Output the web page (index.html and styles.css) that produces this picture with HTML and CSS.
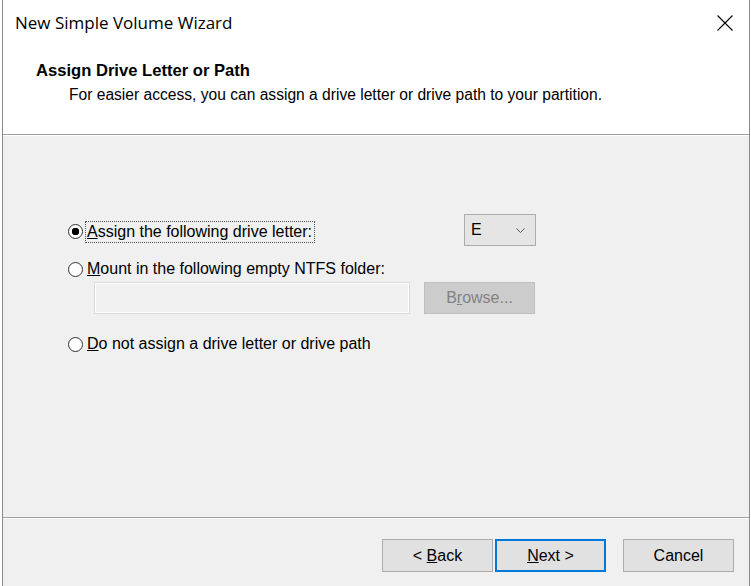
FILE: index.html
```html
<!DOCTYPE html>
<html>
    <head>
        <meta charset="utf-8">
        <title>New Simple Volume Wizard</title>
        <link rel="stylesheet" href="styles.css">
    </head>
    <body>
        <div class="edge"></div>

        <div class="window">
            <div class="titlebar">
                <span class="title">New Simple Volume Wizard</span>
                <svg class="close" width="16" height="16" viewBox="0 0 16 16">
                    <path d="M0.5 0.5 L15.5 15.5 M15.5 0.5 L0.5 15.5" stroke="#000" stroke-width="1.1" fill="none"/>
                </svg>
            </div>

            <div class="header">
                <div class="heading">Assign Drive Letter or Path</div>
                <div class="subtitle">For easier access, you can assign a drive letter or drive path to your partition.</div>
            </div>

            <div class="content">
                <div class="row row-first">
                    <span class="radio checked"></span>
                    <span class="label focused"><u>A</u>ssign the following drive letter:</span>
                    <div class="combo">
                        <span>E</span>
                        <svg width="9" height="5" viewBox="0 0 9 5">
                            <path d="M0.5 0.5 L4.5 4.5 L8.5 0.5" stroke="#555" stroke-width="1" fill="none"/>
                        </svg>
                    </div>
                </div>

                <div class="row row-mount">
                    <span class="radio"></span>
                    <span class="label"><u>M</u>ount in the following empty NTFS folder:</span>
                </div>

                <div class="folder">
                    <div class="field"></div>
                    <div class="btn disabled"><span>B<u>r</u>owse...</span></div>
                </div>

                <div class="row row-none">
                    <span class="radio"></span>
                    <span class="label"><u>D</u>o not assign a drive letter or drive path</span>
                </div>
            </div>

            <div class="footer">
                <div class="btn"><span>&lt; <u>B</u>ack</span></div>
                <div class="btn default"><span><u>N</u>ext &gt;</span></div>
                <div class="btn cancel"><span>Cancel</span></div>
            </div>
        </div>

        <div class="edge edge-right"></div>
    </body>
</html>
```

FILE: styles.css
```css
body {
    display: flex;
    width: 751px;
    height: 586px;
    margin: 0;
    overflow: hidden;
    background: #fff;
    font-family: "Liberation Sans", Arial, sans-serif;
    font-size: 16px;
    color: #000;
}

.edge {
    width: 2px;
    background: #fff;
}

.edge-right {
    width: 1px;
}

.window {
    display: flex;
    flex-direction: column;
    flex: 1;
    border-left: 1px solid #8a8a8a;
    border-right: 1px solid #8a8a8a;
    background: #f0f0f0;
}

.titlebar {
    display: flex;
    align-items: center;
    justify-content: space-between;
    height: 46px;
    padding: 0 16px 0 12px;
    background: #fff;
}

.title {
    font-family: "Open Sans", sans-serif;
    font-size: 17px;
    margin-top: -1px;
}

.close {
    display: block;
}

.header {
    height: 73px;
    padding: 15px 0 0 33px;
    background: #fff;
    border-bottom: 1px solid #a0a0a0;
    box-shadow: 0 1px 0 #fff;
}

.heading {
    font-size: 16.6px;
    font-weight: bold;
    line-height: 20px;
}

.subtitle {
    margin: 4px 0 0 33px;
    font-size: 15.6px;
    line-height: 20px;
}

.content {
    flex: 1;
    padding: 79px 0 0 65px;
    border-bottom: 1px solid #a0a0a0;
    box-shadow: 0 1px 0 #fff;
}

.row {
    display: flex;
    align-items: center;
    height: 20px;
}

.row-first {
    height: 32px;
}

.row-first .radio,
.row-first .label {
    margin-top: 3px;
}

.row-mount {
    margin-top: 13px;
}

.row-none {
    margin-top: 20px;
}

.radio {
    box-sizing: border-box;
    width: 15px;
    height: 15px;
    margin-right: 4px;
    border: 1px solid #333;
    border-radius: 50%;
    background: #fff;
}

.radio.checked {
    background: radial-gradient(circle, #000 0 3.5px, #fff 4px);
}

.label {
    line-height: 20px;
}

.label.focused {
    margin-left: -1px;
    padding: 0 2px 0 1px;
    outline: 1px dotted #555;
}

.combo {
    box-sizing: border-box;
    display: flex;
    align-items: center;
    justify-content: space-between;
    width: 72px;
    height: 32px;
    margin-left: 150px;
    padding: 0 10px 0 6px;
    background: #e5e5e5;
    border: 1px solid #adadad;
}

.folder {
    display: flex;
    gap: 14px;
    margin: 3px 0 0 26px;
}

.field {
    box-sizing: border-box;
    width: 316px;
    height: 32px;
    border: 1px solid #dadada;
    box-shadow: inset 0 0 0 1px #fff;
}

.btn {
    box-sizing: border-box;
    display: flex;
    align-items: center;
    justify-content: center;
    width: 111px;
    height: 33px;
    background: #e1e1e1;
    border: 1px solid #adadad;
}

.btn.disabled {
    height: 32px;
    background: #cccccc;
    border-color: #bfbfbf;
    color: #838383;
}

.btn.default {
    border: 2px solid #0078d7;
}

.footer {
    display: flex;
    justify-content: flex-end;
    gap: 2px;
    height: 47px;
    padding: 21px 15px 0 0;
}

.footer .cancel {
    margin-left: 15px;
}
```
